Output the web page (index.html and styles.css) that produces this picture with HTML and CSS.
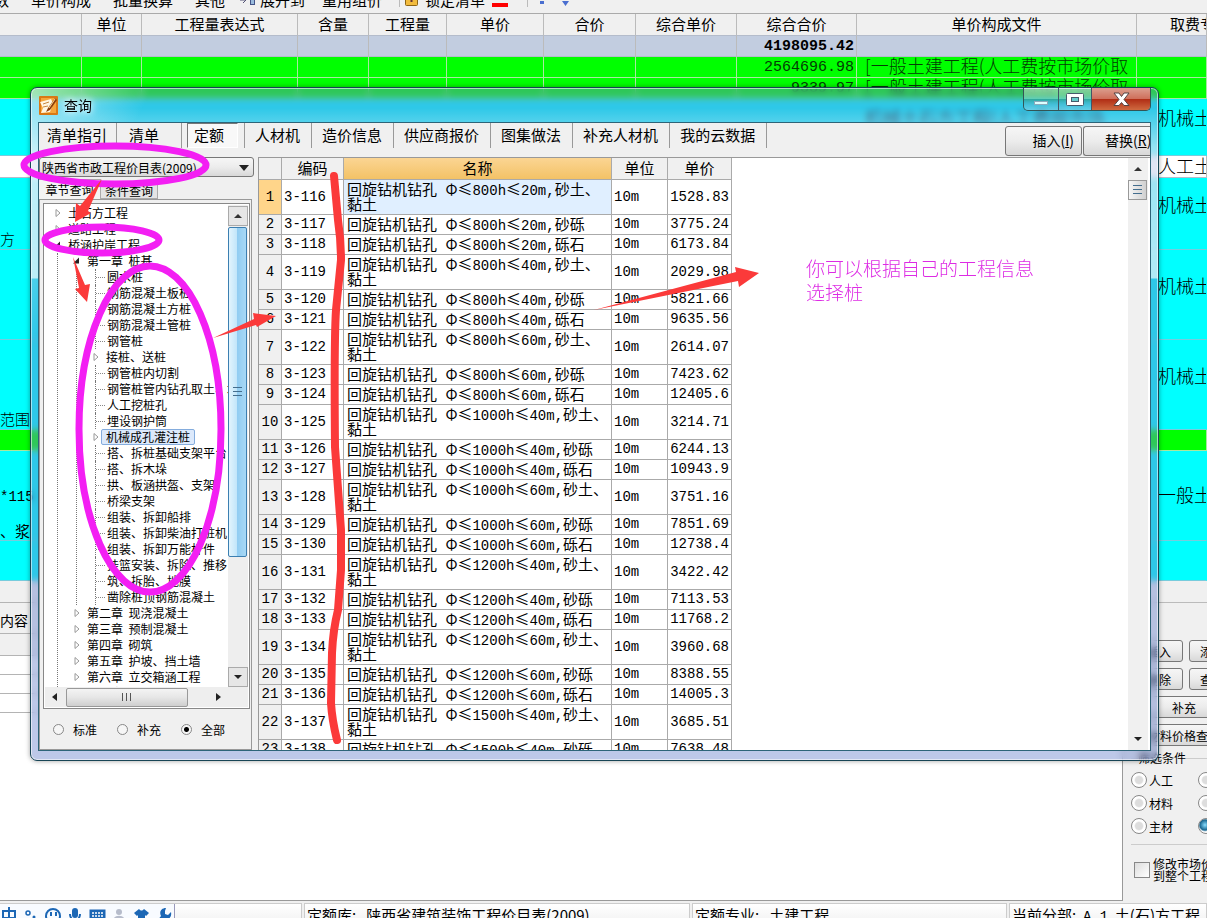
FILE: index.html
```html
<!DOCTYPE html>
<html lang="zh-CN">
<head>
<meta charset="utf-8">
<title>查询</title>
<link rel="stylesheet" href="styles.css">
</head>
<body>
<svg class="defs" aria-hidden="true">
  <symbol id="closed" viewBox="0 0 20 16"><path d="M8 4.5v7l4-3.5z" fill="#fff" stroke="#999"/></symbol>
  <symbol id="open" viewBox="0 0 20 16"><path d="M12 4.500v6h-6z" fill="#222"/></symbol>
</svg>

<div class="toolbar">
  <span class="t-first">数</span><span>单价构成</span><span>批量换算</span><span>其他</span>
  <span class="with-icon"><svg width="16" height="14" viewBox="0 0 16 14"><path d="M0 7h6M3 4l3 3-3 3" fill="none" stroke="#557" stroke-width="1"/><rect x="6.500" y="0.500" width="5" height="6" fill="#9bd" stroke="#458"/><rect x="10.500" y="5.500" width="4" height="6" fill="#9bd" stroke="#458"/></svg>展开到</span>
  <span class="t-reuse">重用组价</span>
  <i class="sep"></i>
  <span class="with-icon lock"><svg width="14" height="14" viewBox="0 0 14 14"><rect x="0.500" y="1.500" width="12" height="11" rx="1" fill="#f2bb3d" stroke="#8d6514"/><path d="M6.500 5v4" stroke="#633" stroke-width="2"/></svg>锁定清单</span>
  <i class="red"></i><i class="sep far"></i>
  <svg class="dots" width="30" height="8" viewBox="0 0 30 8"><path d="M0 2h4v3H0zM22 2h7l-3.500 5z" fill="#4a6fd0"/></svg>
</div>

<table class="sheet">
  <colgroup><col class="s1"><col class="s2"><col class="s3"><col class="s4"><col class="s5"><col class="s6"><col class="s7"><col class="s8"><col class="s9"><col class="s10"><col></colgroup>
  <thead><tr><th></th><th>单位</th><th>工程量表达式</th><th>含量</th><th>工程量</th><th>单价</th><th>合价</th><th>综合单价</th><th>综合合价</th><th>单价构成文件</th><th class="clip">取费专业</th></tr></thead>
  <tbody>
    <tr class="total"><td></td><td></td><td></td><td></td><td></td><td></td><td></td><td></td><td class="num">4198095.42</td><td></td><td></td></tr>
    <tr class="green"><td></td><td></td><td></td><td></td><td></td><td></td><td></td><td></td><td class="num">2564696.98</td><td>[一般土建工程(人工费按市场价取</td><td></td></tr>
    <tr class="green"><td></td><td></td><td></td><td></td><td></td><td></td><td></td><td></td><td class="num">9339.97</td><td>[一般土建工程(人工费按市场价取</td><td></td></tr>
    <tr class="cyan r57"><td></td><td></td><td></td><td></td><td></td><td></td><td></td><td></td><td></td><td class="up">机械土石方工程(人工费按市场</td><td class="up cat">机械土</td></tr>
    <tr class="plain"><td></td><td></td><td></td><td></td><td></td><td></td><td></td><td></td><td></td><td></td><td class="cat">人工土</td></tr>
    <tr class="cyan r72"><td class="low">方</td><td></td><td></td><td></td><td></td><td></td><td></td><td></td><td></td><td></td><td class="up cat">机械土</td></tr>
    <tr class="cyan r90"><td></td><td></td><td></td><td></td><td></td><td></td><td></td><td></td><td></td><td></td><td class="up cat">机械土</td></tr>
    <tr class="cyan r90"><td class="low">范围</td><td></td><td></td><td></td><td></td><td></td><td></td><td></td><td></td><td></td><td class="up cat">机械土</td></tr>
    <tr class="green"><td></td><td></td><td></td><td></td><td></td><td></td><td></td><td></td><td></td><td></td><td></td></tr>
    <tr class="cyan r90"><td class="low two"><p class="mono">*115</p><p>、浆</p></td><td></td><td></td><td></td><td></td><td></td><td></td><td></td><td></td><td></td><td class="cat">一般土</td></tr>
    <tr class="cyan r40"><td></td><td></td><td></td><td></td><td></td><td></td><td></td><td></td><td></td><td></td><td></td></tr>
  </tbody>
</table>

<div class="lower">
  <div class="detail">
    <div class="strip"></div>
    <div class="strip tall">内容</div>
    <div class="strip"></div>
    <div class="line"></div><div class="line"></div><div class="line"></div>
  </div>
  <aside class="side">
    <div class="side-top"></div>
    <div class="side-buttons">
      <div class="pair"><button>插入</button><button class="cut">添加</button></div>
      <div class="pair"><button>删除</button><button class="cut">查询</button></div>
      <button class="wide">补充</button>
      <button class="wide price">材料价格查询</button>
    </div>
    <fieldset>
      <legend>筛选条件</legend>
      <label><input type="radio" name="f">人工</label><input type="radio" name="f" aria-label="机械">
      <label><input type="radio" name="f">材料</label><input type="radio" name="f" aria-label="设备">
      <label><input type="radio" name="f">主材</label><input type="radio" name="f" aria-label="所有" checked>
    </fieldset>
    <label class="apply"><input type="checkbox"><span>修改市场价<br>到整个工程</span></label>
  </aside>
</div>

<footer class="status">
  <div class="cell c1">
    <div class="ime">
      <svg width="174" height="20" viewBox="0 0 174 20" fill="none" stroke="#1c67b5" stroke-width="2">
        <path d="M3 7h12v7H3zM9 3v16"/>
        <circle cx="28" cy="9" r="2" stroke-width="1.500"/><circle cx="34" cy="13" r="1.500" fill="#1c67b5" stroke="none"/>
        <circle cx="53" cy="12" r="7"/><path d="M51 8v4M56 8v4"/>
        <rect x="72" y="4" width="6" height="10" rx="3" fill="#1c67b5" stroke="none"/><path d="M70 10c0 8 10 8 10 0M75 16v4"/>
        <rect x="90" y="6" width="15" height="11" fill="#1c67b5" stroke-width="1"/><path d="M92 9h12M92 12h12" stroke="#fff" stroke-dasharray="2 1" stroke-width="1.500"/>
        <g stroke="none" fill="#b6bccb"><circle cx="119" cy="8" r="3"/><path d="M113 17c0-7 12-7 12 0z"/></g>
        <path d="M134 9l5-4c2 2 3 2 5 0l5 4-3 3-1-1v9h-7v-9l-1 1z" fill="#1c67b5" stroke="none"/>
        <path d="M166 4c-5 0-7 4-5 8l-4 5 3 3 5-5c4 1 7-2 6-7l-3 3-3-1 0-3z" fill="#1c67b5" stroke="none"/>
      </svg>
    </div>
  </div>
  <div class="cell c2">定额库:&nbsp;&nbsp; 陕西省建筑装饰工程价目表(2009)</div>
  <div class="cell c3">定额专业:&nbsp;&nbsp; 土建工程</div>
  <div class="cell c4">当前分部:&nbsp; <span class="mono">A.1</span>&nbsp; 土(石)方工程</div>
</footer>

<section class="dialog" role="dialog" aria-labelledby="dlg-title">
  <header class="titlebar">
    <svg class="logo" width="21" height="21" viewBox="0 0 21 21"><rect x="1" y="1" width="19" height="19" rx="1" fill="#d97814"/><rect x="3" y="3" width="15" height="15" fill="#f5a63a"/><path d="M2 7l11-3 2 4-3 9-9 1 2-5z" fill="#fff6e2"/><path d="M5 9l6-2M5 12l5-1" stroke="#c9873f" fill="none"/><path d="M17 3L10 13l-2 4 4-2L19 5z" fill="#8c3d0c"/><path d="M17 4l-6 9" stroke="#ffd98e"/></svg>
    <h1 id="dlg-title">查询</h1>
    <div class="win-buttons">
      <button aria-label="最小化"><svg width="34" height="22" viewBox="0 0 34 22"><rect x="10.500" y="13.500" width="13" height="3" fill="#dff" stroke="#8ab" /></svg></button>
      <button aria-label="最大化"><svg width="32" height="22" viewBox="0 0 32 22"><rect x="7.500" y="5.500" width="17" height="12" rx="1" fill="#fff" stroke="#465a6b"/><rect x="12.500" y="9.500" width="7" height="4" fill="#6cc" stroke="#465a6b"/></svg></button>
      <button class="close" aria-label="关闭"><svg width="58" height="22" viewBox="0 0 58 22"><path d="M22 5h5l2.500 3.500L32 5h5l-5 6.500 5 6h-5l-2.500-3-2.500 3h-5l5-6z" fill="#fff" stroke="#544" stroke-width="1"/></svg></button>
    </div>
  </header>
  <div class="client">
    <div class="topbar">
      <nav class="tabs">
        <button class="guide">清单指引</button><button class="list">清单</button><button class="pressed">定额</button><button class="after">人材机</button><button>造价信息</button><button>供应商报价</button><button>图集做法</button><button>补充人材机</button><button>我的云数据</button>
      </nav>
      <div class="actions"><button>插入(<u>I</u>)</button><button class="replace">替换(<u>R</u>)</button></div>
    </div>
    <div class="main">
      <div class="left">
        <div class="combo"><select aria-label="定额库"><option>陕西省市政工程价目表(2009)</option></select><i class="tri down"></i></div>
        <div class="subtabs"><button class="on">章节查询</button><button>条件查询</button></div>
        <div class="pane">
          <div class="treebox">
            <div class="treerow">
              <ul class="tree">
                <li><p><svg><use href="#closed"/></svg>土石方工程</p></li>
                <li><p><svg><use href="#closed"/></svg>道路工程</p></li>
                <li><p><svg><use href="#open"/></svg>桥涵护岸工程</p>
                  <ul>
                    <li><p><svg><use href="#open"/></svg>第一章&nbsp; 桩基</p>
                      <ul>
                        <li><p class="leaf">圆木桩</p></li>
                        <li><p class="leaf">钢筋混凝土板桩</p></li>
                        <li><p class="leaf">钢筋混凝土方桩</p></li>
                        <li><p class="leaf">钢筋混凝土管桩</p></li>
                        <li><p class="leaf">钢管桩</p></li>
                        <li><p><svg><use href="#closed"/></svg>接桩、送桩</p></li>
                        <li><p class="leaf">钢管桩内切割</p></li>
                        <li><p class="leaf">钢管桩管内钻孔取土、填</p></li>
                        <li><p class="leaf">人工挖桩孔</p></li>
                        <li><p class="leaf">埋设钢护筒</p></li>
                        <li><p><svg><use href="#closed"/></svg><span class="sel">机械成孔灌注桩</span></p></li>
                        <li><p class="leaf">搭、拆桩基础支架平台</p></li>
                        <li><p class="leaf">搭、拆木垛</p></li>
                        <li><p class="leaf">拱、板涵拱盔、支架</p></li>
                        <li><p class="leaf">桥梁支架</p></li>
                        <li><p class="leaf">组装、拆卸船排</p></li>
                        <li><p class="leaf">组装、拆卸柴油打桩机</p></li>
                        <li><p class="leaf">组装、拆卸万能杆件</p></li>
                        <li><p class="leaf">挂篮安装、拆除、推移</p></li>
                        <li><p class="leaf">筑、拆胎、地膜</p></li>
                        <li><p class="leaf">凿除桩顶钢筋混凝土</p></li>
                      </ul>
                    </li>
                    <li><p><svg><use href="#closed"/></svg>第二章&nbsp; 现浇混凝土</p></li>
                    <li><p><svg><use href="#closed"/></svg>第三章&nbsp; 预制混凝土</p></li>
                    <li><p><svg><use href="#closed"/></svg>第四章&nbsp; 砌筑</p></li>
                    <li><p><svg><use href="#closed"/></svg>第五章&nbsp; 护坡、挡土墙</p></li>
                    <li><p><svg><use href="#closed"/></svg>第六章&nbsp; 立交箱涵工程</p></li>
                    <li><p><svg><use href="#closed"/></svg>第七章&nbsp; 钢结构</p></li>
                  </ul>
                </li>
              </ul>
              <div class="vscroll"><span class="sb"><i class="tri up"></i></span><span class="thumb"><i class="grip"></i></span><span class="sb"><i class="tri down"></i></span></div>
            </div>
            <div class="hscroll"><i class="tri back"></i><span class="hthumb"><i class="vgrip"></i></span><i class="tri next"></i></div>
          </div>
          <div class="scope">
            <label><input type="radio" name="scope">标准</label><label><input type="radio" name="scope">补充</label><label><input type="radio" name="scope" checked>全部</label>
          </div>
        </div>
      </div>
      <div class="right">
        <div class="gridwrap">
          <table class="grid">
            <colgroup><col class="g1"><col class="g2"><col class="g3"><col class="g4"><col class="g5"></colgroup>
            <thead><tr><th></th><th>编码</th><th class="active">名称</th><th>单位</th><th>单价</th></tr></thead>
            <tbody>
              <tr class="current"><th>1</th><td>3-116</td><td>回旋钻机钻孔 <b></b>Φ≤<span>800h</span>≤<span>20m,</span>砂土、<br>黏土</td><td>10m</td><td>1528.83</td></tr>
              <tr><th>2</th><td>3-117</td><td>回旋钻机钻孔 <b></b>Φ≤<span>800h</span>≤<span>20m,</span>砂砾</td><td>10m</td><td>3775.24</td></tr>
              <tr><th>3</th><td>3-118</td><td>回旋钻机钻孔 <b></b>Φ≤<span>800h</span>≤<span>20m,</span>砾石</td><td>10m</td><td>6173.84</td></tr>
              <tr><th>4</th><td>3-119</td><td>回旋钻机钻孔 <b></b>Φ≤<span>800h</span>≤<span>40m,</span>砂土、<br>黏土</td><td>10m</td><td>2029.98</td></tr>
              <tr><th>5</th><td>3-120</td><td>回旋钻机钻孔 <b></b>Φ≤<span>800h</span>≤<span>40m,</span>砂砾</td><td>10m</td><td>5821.66</td></tr>
              <tr><th>6</th><td>3-121</td><td>回旋钻机钻孔 <b></b>Φ≤<span>800h</span>≤<span>40m,</span>砾石</td><td>10m</td><td>9635.56</td></tr>
              <tr><th>7</th><td>3-122</td><td>回旋钻机钻孔 <b></b>Φ≤<span>800h</span>≤<span>60m,</span>砂土、<br>黏土</td><td>10m</td><td>2614.07</td></tr>
              <tr><th>8</th><td>3-123</td><td>回旋钻机钻孔 <b></b>Φ≤<span>800h</span>≤<span>60m,</span>砂砾</td><td>10m</td><td>7423.62</td></tr>
              <tr><th>9</th><td>3-124</td><td>回旋钻机钻孔 <b></b>Φ≤<span>800h</span>≤<span>60m,</span>砾石</td><td>10m</td><td>12405.6</td></tr>
              <tr><th>10</th><td>3-125</td><td>回旋钻机钻孔 <b></b>Φ≤<span>1000h</span>≤<span>40m,</span>砂土、<br>黏土</td><td>10m</td><td>3214.71</td></tr>
              <tr><th>11</th><td>3-126</td><td>回旋钻机钻孔 <b></b>Φ≤<span>1000h</span>≤<span>40m,</span>砂砾</td><td>10m</td><td>6244.13</td></tr>
              <tr><th>12</th><td>3-127</td><td>回旋钻机钻孔 <b></b>Φ≤<span>1000h</span>≤<span>40m,</span>砾石</td><td>10m</td><td>10943.9</td></tr>
              <tr><th>13</th><td>3-128</td><td>回旋钻机钻孔 <b></b>Φ≤<span>1000h</span>≤<span>60m,</span>砂土、<br>黏土</td><td>10m</td><td>3751.16</td></tr>
              <tr><th>14</th><td>3-129</td><td>回旋钻机钻孔 <b></b>Φ≤<span>1000h</span>≤<span>60m,</span>砂砾</td><td>10m</td><td>7851.69</td></tr>
              <tr><th>15</th><td>3-130</td><td>回旋钻机钻孔 <b></b>Φ≤<span>1000h</span>≤<span>60m,</span>砾石</td><td>10m</td><td>12738.4</td></tr>
              <tr><th>16</th><td>3-131</td><td>回旋钻机钻孔 <b></b>Φ≤<span>1200h</span>≤<span>40m,</span>砂土、<br>黏土</td><td>10m</td><td>3422.42</td></tr>
              <tr><th>17</th><td>3-132</td><td>回旋钻机钻孔 <b></b>Φ≤<span>1200h</span>≤<span>40m,</span>砂砾</td><td>10m</td><td>7113.53</td></tr>
              <tr><th>18</th><td>3-133</td><td>回旋钻机钻孔 <b></b>Φ≤<span>1200h</span>≤<span>40m,</span>砾石</td><td>10m</td><td>11768.2</td></tr>
              <tr><th>19</th><td>3-134</td><td>回旋钻机钻孔 <b></b>Φ≤<span>1200h</span>≤<span>60m,</span>砂土、<br>黏土</td><td>10m</td><td>3960.68</td></tr>
              <tr><th>20</th><td>3-135</td><td>回旋钻机钻孔 <b></b>Φ≤<span>1200h</span>≤<span>60m,</span>砂砾</td><td>10m</td><td>8388.55</td></tr>
              <tr><th>21</th><td>3-136</td><td>回旋钻机钻孔 <b></b>Φ≤<span>1200h</span>≤<span>60m,</span>砾石</td><td>10m</td><td>14005.3</td></tr>
              <tr><th>22</th><td>3-137</td><td>回旋钻机钻孔 <b></b>Φ≤<span>1500h</span>≤<span>40m,</span>砂土、<br>黏土</td><td>10m</td><td>3685.51</td></tr>
              <tr><th>23</th><td>3-138</td><td>回旋钻机钻孔 <b></b>Φ≤<span>1500h</span>≤<span>40m,</span>砂砾</td><td>10m</td><td>7638.48</td></tr>
            </tbody>
          </table>
        </div>
        <div class="gscroll"><span><i class="tri up"></i></span><span class="gthumb"><i class="grip"></i></span><span class="end"><i class="tri down"></i></span></div>
      </div>
    </div>
  </div>
</section>

<svg class="marks" aria-hidden="true">
  <g fill="none" stroke="#f31ff3" stroke-width="7">
    <ellipse cx="115" cy="165" rx="91" ry="19"/>
    <ellipse cx="102" cy="240" rx="57" ry="13"/>
    <ellipse cx="150" cy="429" rx="71" ry="163"/>
  </g>
  <path d="M334 176L338 220Q341 240 341 260L336 310Q334 340 335 447L341 530V570L338 610Q333 630 332 653L331 703Q332 720 337 740" fill="none" stroke="#fb3a3a" stroke-width="8" stroke-linecap="round" stroke-linejoin="round"/>
  <g fill="#fb3a3a">
    <path d="M102 179L88 211 91 213 75 222 76 203 80 206z"/>
    <path d="M73 257L85 285 90 284 87 302 75 289 79 288z"/>
    <path d="M213 338L254 319 253 313 276 316 257 327 256 325z"/>
    <path d="M594 310L736 272 735 267 759 273 739 287 738 281z"/>
  </g>
</svg>
<p class="note">你可以根据自己的工程信息<br>选择桩</p>
</body>
</html>
```
FILE: styles.css
```css
* { box-sizing: border-box; }
body {
  margin: 0; height: 100vh; overflow: hidden; position: relative;
  display: flex; flex-direction: column; background: #f0f0f0; color: #000;
  font: 15px/15px "Noto Sans CJK SC", sans-serif;
}
button, select, input { font: inherit; color: inherit; margin: 0; }
button { padding: 0; border: 0; background: none; white-space: nowrap; }
ul, p, h1 { margin: 0; padding: 0; list-style: none; font-weight: 400; }
.defs { position: absolute; width: 0; height: 0; }
i { flex: none; }

/* toolbar */
.toolbar { flex: none; height: 14px; overflow: hidden; display: flex; align-items: flex-end; gap: 22px; padding-bottom: 6px; border-bottom: 1px solid #aaa; white-space: nowrap; }
.t-first { width: 9px; direction: rtl; }
.with-icon { display: flex; align-items: center; gap: 4px; margin-left: -7px; }
.t-reuse { margin-left: -5px; }
.sep { width: 1px; height: 14px; background: #bbb; margin-left: -5px; }
.lock { gap: 6px; margin-left: -17px; }
.red { width: 16px; height: 4px; background: #f00; margin-left: -15px; }
.far { margin-left: -3px; }
.dots { margin-left: -10px; }

/* estimate sheet */
.sheet { flex: none; width: 100%; table-layout: fixed; border-collapse: separate; border-spacing: 0; }
.s1 { width: 82px; } .s2 { width: 60px; } .s3 { width: 156px; } .s4 { width: 71px; } .s5 { width: 78px; }
.s6 { width: 97px; } .s7 { width: 92px; } .s8 { width: 101px; } .s9 { width: 120px; } .s10 { width: 280px; }
.sheet th, .sheet td { padding: 0; border-right: 1px solid #bbb; border-bottom: 1px solid #b4bccb; font-weight: 400; white-space: nowrap; overflow: hidden; }
.sheet th { height: 22px; padding-bottom: 3px; }
.sheet .clip { text-align: left; padding-left: 33px; }
.sheet td { height: 21px; padding: 0 0 3px 8px; font-size: 18px; font-weight: 300; line-height: 17px; }
.sheet .num { font: 15px/17px "Liberation Mono", monospace; text-align: right; padding: 0 2px 0 0; }
.total { background: #c2cde0; }
.sheet .total .num { font-weight: 700; }
.green { background: #0f0; color: #043c04; }
.green td { border-color: #a8e8a0; }
.cyan { background: #0ff; }
.cyan td { border-right-color: #0ff; border-bottom-color: #7cd; }
.plain { background: #fff; }
.plain td { height: 22px; }
.sheet .r57 td { height: 57px; } .sheet .r72 td { height: 72px; } .sheet .r90 td { height: 90px; } .sheet .r40 td { height: 40px; }
.sheet .up { padding-bottom: 19px; }
.sheet .cat { padding-left: 21px; }
.sheet .low { vertical-align: bottom; padding: 0 0 2px; font-size: 15px; }
.sheet .two { padding: 0; line-height: 18px; }
.two .mono { margin-bottom: 16px; }

/* lower area */
.lower { flex: 1; min-height: 0; display: flex; }
.detail { flex: 1; background: #fff; border-right: 1px solid #999; border-bottom: 1px solid #999; }
.strip { height: 22px; background: #f0f0f0; border-bottom: 1px solid #b4b4b4; }
.strip.tall { height: 31px; line-height: 34px; font-size: 14px; }
.line { height: 19px; border-bottom: 1px solid #b4b4b4; }
.side { width: 84px; overflow: hidden; padding-left: 8px; font-size: 12px; }
.side-top { height: 22px; border-bottom: 1px solid #bbb; }
.side-buttons { padding-top: 37px; display: flex; flex-direction: column; gap: 6px; }
.pair { display: flex; gap: 6px; }
.side button, .actions button { border: 1px solid #777; border-radius: 3px; background: linear-gradient(#f6f6f6, #ececec 50%, #d8d8d8); }
.side button { height: 22px; width: 52px; flex: none; padding-left: 4px; }
.side .cut { text-align: left; padding-left: 10px; }
.side .wide { width: 106px; padding: 0; }
.side .price { text-align: right; width: 90px; }
fieldset { min-width: 0; margin: 5px -40px 0 0; padding: 7px 0 10px; border: 1px solid #ccc; border-left: 0; display: grid; grid-template-columns: 60px 20px; gap: 7px; align-items: center; }
legend { margin-left: 7px; padding: 0; line-height: 14px; }
fieldset label { display: flex; align-items: center; gap: 2px; }
fieldset input { appearance: none; flex: none; width: 16px; height: 16px; border: 1px solid #888; border-radius: 50%; background: radial-gradient(#ddd 35%, #fff 50%); }
fieldset input:checked { background: radial-gradient(circle at 6px 6px, #8df, #17658f 45%, #fff 60%); }
.apply { display: flex; gap: 3px; align-items: center; margin: 13px 0 0 3px; white-space: nowrap; line-height: 12px; }
.apply input { appearance: none; flex: none; width: 16px; height: 16px; border: 1px solid #888; background: linear-gradient(135deg, #ddd, #fff); }

/* status bar */
.status { flex: none; height: 17px; padding-top: 2px; display: flex; gap: 2px; overflow: hidden; }
.cell { height: 24px; border: 1px solid #ccc; background: linear-gradient(#fff, #f0f0f0); line-height: 21px; padding-left: 2px; white-space: nowrap; overflow: hidden; flex: none; }
.c1 { width: 302px; padding: 0; border-left: 0; } .c2 { width: 386px; } .c3 { width: 315px; } .c4 { flex: 1; }
.ime { width: 175px; height: 24px; border-right: 1px solid #99b; background: #f8fbff; }
.ime svg { display: block; }
.mono { font-family: "Liberation Mono", monospace; font-size: 14px; }

/* dialog */
.dialog {
  position: absolute; inset: 87px 48px 157px 30px; display: flex; flex-direction: column; padding: 0 7px 9px;
  border: 1px solid #174455; border-radius: 7px;
  background: linear-gradient(115deg, #ffffff90, #ffffff00 110px), linear-gradient(#ffffff00 20px, #ffffff80 60px, #ffffffa0 190px, #ffffff00 191px), rgb(104 129 203 / 44%);
  backdrop-filter: blur(3px);
  box-shadow: inset 0 0 0 1px #ffffff90, 0 0 5px #00000060;
}
.titlebar { height: 34px; flex: none; display: flex; align-items: center; position: relative; }
.logo { flex: none; }
h1 { flex: 1; font-size: 14px; line-height: 18px; padding-left: 5px; text-shadow: 0 0 6px #fff, 0 0 10px #fff; }
.win-buttons { align-self: flex-start; display: flex; border: 1px solid #355; border-top: 0; border-radius: 0 0 5px 5px; overflow: hidden; }
.win-buttons button { height: 22px; border-right: 1px solid #456; background: linear-gradient(#ffffff70, #ffffff30 50%, #00304030 50%, #ffffff40); }
.win-buttons svg { display: block; }
.win-buttons .close { border: 0; background: linear-gradient(#dba08f, #cf705c 48%, #b02c14 50%, #cf6a40); }
.client { flex: 1; min-height: 0; display: flex; flex-direction: column; border: 1px solid #2d6478; background: #f0f0f0; overflow: hidden; }
.topbar { flex: none; height: 34px; display: flex; justify-content: space-between; overflow: hidden; }
.tabs { display: flex; height: 25px; }
.tabs button { padding: 0 11px 3px 10px; border-right: 1px solid #999; }
.tabs .guide { padding: 0 9px 3px 8px; }
.tabs .list { padding: 0 22px 3px 12px; }
.tabs .pressed { margin: 0 6px 0 5px; padding: 0 13px 2px 6px; border: 1px solid #777; border-right-color: #fff; border-bottom-color: #fff; background: #f8f8f8; }
.tabs .after { border-left: 1px solid #999; }
.actions { display: flex; gap: 1px; padding-top: 3px; overflow: hidden; }
.actions button { width: 77px; height: 30px; font-size: 14px; text-align: right; padding-right: 7px; padding-bottom: 2px; }
.actions .replace { width: 67px; text-align: left; padding: 0 0 2px 21px; border-right: 0; border-radius: 3px 0 0 3px; overflow: hidden; }
.main { flex: 1; min-height: 0; display: flex; gap: 4px; }

.left { width: 215px; flex: none; display: flex; flex-direction: column; font-size: 12px; }
.combo { position: relative; display: flex; }
.combo select { appearance: none; width: 100%; height: 20px; padding: 0 2px; border: 1px solid #777; border-radius: 3px; background: linear-gradient(#f6f6f6, #ececec 50%, #d8d8d8); }
.combo .tri { position: absolute; right: 5px; top: 8px; border-width: 6px 5px 0; }
.tri { width: 0; height: 0; border: 0 solid transparent; }
.tri.down { border-width: 4px 4px 0; border-top-color: #222; }
.combo .tri.down { border-width: 6px 5px 0; }
.tri.up { border-width: 0 4px 4px; border-bottom-color: #333; }
.tri.back { border-width: 4px 5px 4px 0; border-right-color: #222; }
.tri.next { border-width: 4px 0 4px 5px; border-left-color: #222; }
.subtabs { flex: none; height: 22px; display: flex; align-items: flex-end; }
.subtabs button { height: 17px; width: 57px; border: 1px solid #aaa; border-left: 0; background: #e4e4e4; }
.subtabs .on { height: 20px; width: 62px; background: #f4f4f4; border-bottom: 0; }
.pane { flex: 1; min-height: 0; margin-right: 2px; padding: 3px 1px 0 3px; border: 1px solid #999; display: flex; flex-direction: column; }
.treebox { flex: 1; min-height: 0; padding: 1px; border: 1px solid #888; background: #fff; display: flex; flex-direction: column; }
.treerow { flex: 1; min-height: 0; display: flex; justify-content: space-between; }
.tree { flex: 1; padding-left: 3px; overflow: hidden; white-space: nowrap; }
.tree ul { margin-left: 9px; padding-left: 9px; border-left: 1px dotted #777; }
.tree p { height: 16px; line-height: 16px; display: flex; align-items: center; }
.tree svg { width: 20px; height: 16px; flex: none; }
.leaf::before { content: ""; width: 11px; height: 16px; margin-left: 9px; flex: none; border-left: 1px dotted #777; background: repeating-linear-gradient(90deg, #888 0 1px, #fff 1px 2px) 0 8px / 9px 1px no-repeat; }
.sel { margin: 0 -4px 0 -5px; padding: 0 4px; line-height: 14px; border: 1px solid #84acdd; border-radius: 2px; background: #dce9fb; }
.vscroll { width: 20px; flex: none; padding-top: 1px; display: flex; flex-direction: column; background: #eee; }
.sb, .gscroll span { height: 20px; flex: none; display: flex; align-items: center; justify-content: center; }
.sb { border: 1px solid #aaa; background: #e6e6e6; }
.thumb { height: 330px; flex: none; margin: 1px 1px auto 0; border: 1px solid #3c7fb1; border-radius: 2px; background: linear-gradient(90deg, #e2f4fd, #c3e6fa 45%, #92cdf2 50%, #a8d8f5); display: flex; align-items: center; justify-content: center; }
.grip { width: 9px; height: 11px; background: repeating-linear-gradient(#446e8e 0 1px, transparent 1px 4px); }
.hscroll { height: 20px; flex: none; display: flex; align-items: center; background: #eee; padding: 0 27px 0 7px; gap: 9px; }
.hthumb { width: 122px; height: 19px; margin-right: auto; border: 1px solid #999; border-radius: 2px; background: linear-gradient(#f4f4f4, #e6e6e6 50%, #cfcfcf); display: flex; align-items: center; justify-content: center; }
.vgrip { width: 10px; height: 8px; background: repeating-linear-gradient(90deg, #555 0 1px, transparent 1px 4px); }
.scope { flex: none; height: 40px; padding-left: 10px; display: flex; align-items: center; gap: 20px; }
.scope label { display: flex; align-items: center; gap: 9px; }
.scope input { appearance: none; width: 11px; height: 11px; border: 1px solid #888; border-radius: 50%; background: #f6f6f6; }
.scope input:checked { background: radial-gradient(#000 0 2px, #f6f6f6 3px); }

.right { flex: 1; min-width: 0; display: flex; background: #fff; border: 1px solid #999; border-right: 0; border-bottom: 0; }
.gridwrap { flex: 1; min-width: 0; overflow: hidden; }
.grid { width: 473px; table-layout: fixed; border-collapse: separate; border-spacing: 0; }
.g1 { width: 23px; } .g2 { width: 62px; } .g3 { width: 268px; } .g4 { width: 56px; } .g5 { width: 64px; }
.grid th, .grid td { padding: 2px 0 2px 2px; border-right: 1px solid #aaa; border-bottom: 1px solid #aaa; font-weight: 400; text-align: left; white-space: nowrap; line-height: 15px; }
.grid thead th { height: 22px; background: #f0f0f0; text-align: center; padding: 0 0 2px; }
.grid thead .active { background: linear-gradient(#fbd593, #f3c266); }
.grid tbody th, .grid td, .grid span { font-family: "Liberation Mono", monospace; font-size: 14px; }
.grid tbody th { background: #f0f0f0; text-align: center; padding: 2px 0; }
.grid td:nth-child(3) { font: 15px/15px "Noto Sans CJK SC", sans-serif; padding: 1px 0 3px 3px; }
.grid td:nth-child(3) span { line-height: 0; }
.grid b { display: inline-block; width: 5px; }
.grid td:last-child { text-align: right; padding: 2px 2px 2px 0; }
.grid .current th { background: #ffd58a; }
.grid .current td:nth-child(3) { background: #e0efff; }
.gscroll { width: 20px; flex: none; margin-right: 2px; display: flex; flex-direction: column; background: #f0f0f0; }
.gscroll span { height: 22px; }
.gscroll .gthumb { height: 20px; margin-right: 1px; border: 1px solid #999; background: linear-gradient(90deg, #f6f6f6, #d0d0d0); }
.gscroll .end { margin-top: auto; }

/* annotations over the window */
.marks { position: absolute; inset: 0; width: 100%; height: 100%; pointer-events: none; }
.note { position: absolute; left: 806px; top: 256px; color: #dd2be4; font-size: 19px; line-height: 24px; font-weight: 300; }
```
